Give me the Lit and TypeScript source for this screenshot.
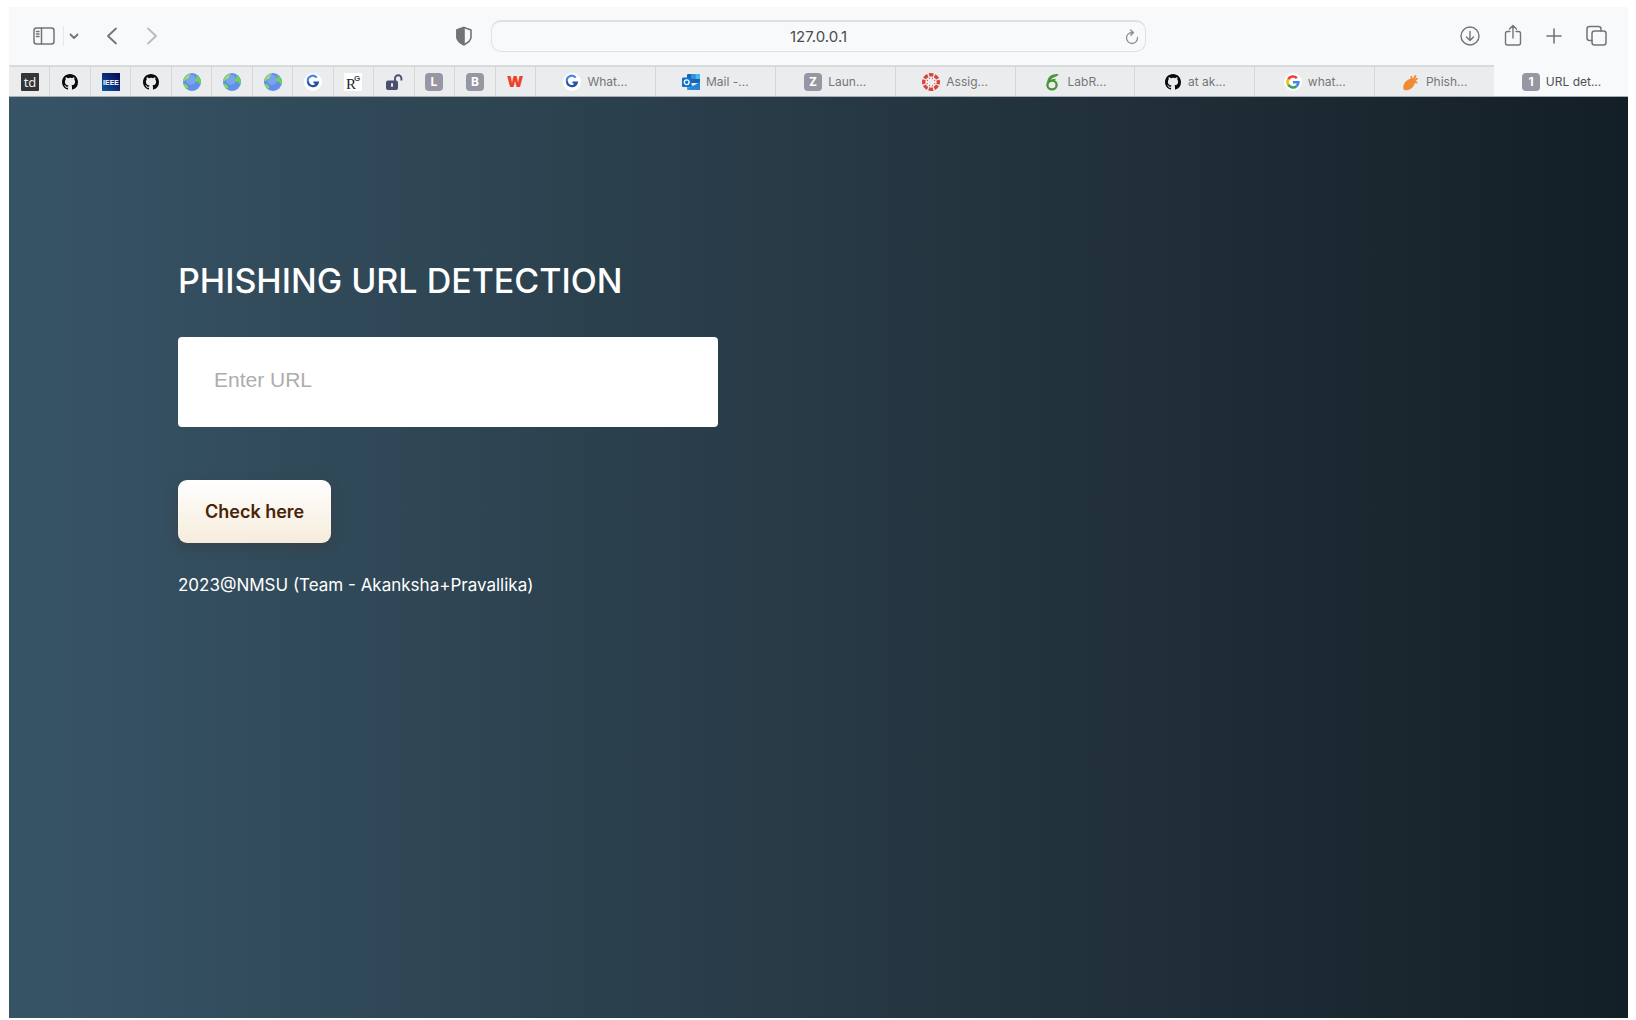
import { LitElement, html, svg, css, TemplateResult } from "lit";
import { customElement, state } from "lit/decorators.js";

interface Tab {
  name: string;
  icon: TemplateResult;
  label?: string;
}

const frame = (content: TemplateResult) =>
  html`<svg class="favicon" viewBox="0 0 18 18" aria-hidden="true">${content}</svg>`;

const letter = (char: string) =>
  frame(svg`<rect width="18" height="18" rx="4" fill="#9796a3"/>
    <text x="9" y="13" text-anchor="middle" font-family="Inter, sans-serif" font-size="12" font-weight="700" fill="#fff">${char}</text>`);

const github = () =>
  frame(svg`<path transform="translate(1 1)" fill="#0a0a0a" d="M8 0C3.58 0 0 3.58 0 8c0 3.54 2.29 6.53 5.47 7.59.4.07.55-.17.55-.38v-1.49c-2.23.48-2.7-.95-2.7-.95-.36-.92-.89-1.17-.89-1.17-.73-.5.05-.49.05-.49.81.06 1.23.83 1.23.83.72 1.23 1.88.87 2.34.67.07-.52.28-.88.51-1.08-1.78-.2-3.64-.89-3.64-3.95 0-.87.31-1.59.82-2.15-.08-.2-.36-1.02.08-2.12 0 0 .67-.21 2.2.82A7.6 7.6 0 0 1 8 3.86c.68 0 1.36.09 2 .27 1.53-1.04 2.2-.82 2.2-.82.44 1.1.16 1.92.08 2.12.51.56.82 1.27.82 2.15 0 3.07-1.87 3.75-3.65 3.95.29.25.54.73.54 1.48v2.2c0 .21.15.46.55.38A8 8 0 0 0 16 8c0-4.42-3.58-8-8-8z"/>`);

const globe = () =>
  frame(svg`<circle cx="9" cy="9" r="9" fill="#5f8fe8"/>
    <path d="M1.500 5C3 2 6 .7 8 .8c-.5 1.300-1.200 1.500-2 2.300.3 1.500-1 2-1.500 3C3.300 5.700 2.500 6.500 2.600 7.500 1.800 8 1 8 .3 8 .4 6.800.9 5.800 1.500 5z" fill="#8fdc60"/>
    <path d="M.5 11c1.500-.3 3.300.5 4.200 2 .8 1 .3 2.200.5 3.100C3 15.200 1.200 13.500.5 11z" fill="#7fe04e"/>
    <path d="M13 2.500c2.500.8 4.500 3 5 6-.1 1.200-.4 2.200-.8 3-1.200-.5-1-2-2.200-2.500-1.500 0-2.500-.7-2.700-2 0-1.300.8-1.800 1.200-2.500-.5-.6-.8-1.300-.5-2z" fill="#70d24d"/>
    <circle cx="8" cy="7" r="5" fill="#fff" opacity=".18"/>`);

const grammar = () =>
  frame(svg`<circle cx="9" cy="9" r="9" fill="#fff"/>
    <path d="M12.800 4.700A5 5 0 0 0 4 9" fill="none" stroke="#4a86e0" stroke-width="2.200"/>
    <path d="M4 8.500A5 5 0 0 0 13.800 9.500H9.500M13.800 9.500L10.500 13" fill="none" stroke="#2450a8" stroke-width="2.200"/>`);

const google = () =>
  frame(svg`<circle cx="9" cy="9" r="9" fill="#fff"/>
    <path d="M12.900 5.100A5.500 5.500 0 0 0 4.200 6.300" fill="none" stroke="#ea4335" stroke-width="2.600"/>
    <path d="M4.200 6.300A5.500 5.500 0 0 0 4.200 11.700" fill="none" stroke="#fbbc05" stroke-width="2.600"/>
    <path d="M4.200 11.700A5.500 5.500 0 0 0 12.500 13.200" fill="none" stroke="#34a853" stroke-width="2.600"/>
    <path d="M9 9.200H14.400A5.500 5.500 0 0 1 12.500 13.200" fill="none" stroke="#4285f4" stroke-width="2.600"/>`);

const td = () =>
  frame(svg`<rect width="18" height="18" rx="1" fill="#353535"/>
    <text x="9" y="14" text-anchor="middle" font-family="'Noto Sans', sans-serif" font-size="13" fill="#eee">td</text>`);

const ieee = () =>
  frame(svg`<defs><linearGradient id="navy" x1="1" y1="0" x2="0" y2="1"><stop offset="0" stop-color="#060b4c"/><stop offset=".5" stop-color="#0b2c7c"/><stop offset="1" stop-color="#0a5ba5"/></linearGradient></defs>
    <rect width="18" height="18" fill="url(#navy)"/>
    <text x="9" y="12" text-anchor="middle" font-family="'Liberation Sans Narrow', 'Liberation Sans', sans-serif" font-size="7" font-weight="700" fill="#fff">IEEE</text>`);

const research = () =>
  frame(svg`<rect width="18" height="18" fill="#fff"/>
    <text x="2" y="16" font-family="'Liberation Serif', serif" font-size="15" fill="#222">R</text>
    <text x="10" y="8" font-family="'Liberation Sans', sans-serif" font-size="8" font-weight="700" fill="#444">G</text>`);

const padlock = () =>
  frame(svg`<rect x="1" y="7.500" width="12" height="9.500" rx="2" fill="#4a4f6d"/>
    <path d="M10 8V5.500a3.200 3.200 0 0 1 6.400 0V7.500" fill="none" stroke="#4a4f6d" stroke-width="1.900"/>
    <rect x="6" y="10" width="2" height="4" rx="1" fill="#e9eaec"/>`);

const redW = () =>
  frame(svg`<text x="9" y="14" text-anchor="middle" font-family="Inter, sans-serif" font-size="15" font-weight="900" fill="#ee4228">W</text>`);

const outlook = () =>
  frame(svg`<rect x="5" y="1" width="13" height="9" rx="1" fill="#1b64b5"/>
    <rect x="9" y="1" width="4.500" height="5" fill="#2f93e0"/>
    <rect x="13.500" y="1" width="4.500" height="5" fill="#48b9f3"/>
    <path d="M5 9l6.500 4L18 9v7a1 1 0 0 1-1 1H6a1 1 0 0 1-1-1z" fill="#3fabec"/>
    <path d="M5 16.500L18 9v7a1 1 0 0 1-1 1z" fill="#2583d3"/>
    <rect y="4.500" width="9.500" height="9.500" rx="1" fill="#1270c6"/>
    <circle cx="4.700" cy="9.200" r="2.400" fill="none" stroke="#fff" stroke-width="1.300"/>`);

const canvasRing = () =>
  frame(svg`<circle cx="9" cy="9" r="7.300" fill="none" stroke="#d8453b" stroke-width="3.400" stroke-dasharray="4.400 1.333" stroke-dashoffset="2.200"/>
    <g fill="#d8453b">${[22.5, 67.5, 112.5, 157.5, 202.5, 247.5, 292.5, 337.5].map(
      (a) => svg`<circle cx="13" cy="9" r=".6" transform="rotate(${a} 9 9)"/>`
    )}</g>`);

const overleaf = () =>
  frame(svg`<ellipse cx="8" cy="12" rx="4.600" ry="4.400" fill="none" stroke="#48963a" stroke-width="2.300"/>
    <path d="M3.200 12C2.500 7 5 3 8 2c2-.8 4-1 6.500-1-.5 2-2.500 2.700-4.500 3.200C7.500 5 5.500 7.500 5.500 10z" fill="#48963a"/>
    <path d="M6 8.800c1.500-1.800 3.500-2.500 5.500-2.300" fill="none" stroke="#48963a" stroke-width="1.600"/>`);

const carrot = () =>
  frame(svg`<path d="M2 16.800c-1.400-1.400-.8-5.500 1.300-7.700C5.300 6.800 8 5.300 10 6l2.500 2c.8 2-.1 4.400-2.200 6.400-2 2.200-6.500 3.800-8.300 2.400z" fill="#f08a33"/>
    <path d="M10 7L9.300 4M11 7.500l2.500-4.500M11.500 8l3.500-2.300M11.500 8.500l3 1" fill="none" stroke="#f08a33" stroke-width="1.900" stroke-linecap="round"/>`);

const tabs: Tab[] = [
  { name: "td", icon: td() },
  { name: "GitHub", icon: github() },
  { name: "IEEE", icon: ieee() },
  { name: "GitHub", icon: github() },
  { name: "Web page", icon: globe() },
  { name: "Web page", icon: globe() },
  { name: "Web page", icon: globe() },
  { name: "G", icon: grammar() },
  { name: "RG", icon: research() },
  { name: "Open access", icon: padlock() },
  { name: "L", icon: letter("L") },
  { name: "B", icon: letter("B") },
  { name: "W", icon: redW() },
  { name: "What", icon: grammar(), label: "What..." },
  { name: "Mail", icon: outlook(), label: "Mail -..." },
  { name: "Laun", icon: letter("Z"), label: "Laun..." },
  { name: "Assig", icon: canvasRing(), label: "Assig..." },
  { name: "LabR", icon: overleaf(), label: "LabR..." },
  { name: "at ak", icon: github(), label: "at ak..." },
  { name: "what", icon: google(), label: "what..." },
  { name: "Phish", icon: carrot(), label: "Phish..." },
  { name: "URL det", icon: letter("1"), label: "URL det..." },
];

@customElement("browser-toolbar")
export class BrowserToolbar extends LitElement {
  static styles = css`
    :host {
      display: block;
      background: #f8f9fb;
      font-family: Inter, sans-serif;
    }
    .bar {
      display: grid;
      grid-template-columns: 1fr 40.5% 1fr;
      align-items: center;
      height: 58px;
    }
    .side {
      display: flex;
      align-items: center;
      padding: 0 17px 0 23px;
    }
    .end {
      justify-content: flex-end;
      gap: 21px;
    }
    .tool {
      display: flex;
      padding: 0;
      border: 0;
      background: none;
      color: #737477;
    }
    .tool svg {
      display: block;
      fill: none;
      stroke: currentColor;
      stroke-linecap: round;
      stroke-linejoin: round;
    }
    .menu {
      margin-left: 7px;
      border-left: 1px solid #e6e7e9;
    }
    .back {
      margin-left: 16px;
    }
    .forward {
      margin-left: 16px;
      color: #b9babd;
    }
    .shield {
      margin-left: auto;
    }
    .address {
      display: flex;
      align-items: center;
      box-sizing: border-box;
      height: 32px;
      padding: 0 5px 0 21px;
      border: 1px solid #dfe0e2;
      border-top-width: 2px;
      border-radius: 10px;
    }
    .url {
      flex: 1;
      min-width: 0;
      padding: 0;
      border: 0;
      outline: 0;
      background: none;
      color: #4b4c4e;
      font: 15px Inter, sans-serif;
      text-align: center;
    }
  `;

  render() {
    return html`
      <div class="bar">
        <div class="side">
          <button class="tool" aria-label="Sidebar">
            <svg width="24" height="24" viewBox="0 0 24 24" stroke-width="1.500">
              <rect x="2" y="4" width="20" height="16" rx="2.500"/>
              <path d="M9.500 4v16M4.500 7.500h2.500M4.500 10h2.500M4.500 12.500h2.500"/>
            </svg>
          </button>
          <button class="tool menu" aria-label="Tab groups">
            <svg width="20" height="20" viewBox="0 0 20 20" stroke-width="1.800"><path d="M6.500 8.500L10 12l3.500-3.500"/></svg>
          </button>
          <button class="tool back" aria-label="Back">
            <svg width="24" height="24" viewBox="0 0 24 24" stroke-width="1.800"><path d="M16 4.500L8 12l8 7.500"/></svg>
          </button>
          <button class="tool forward" aria-label="Forward">
            <svg width="24" height="24" viewBox="0 0 24 24" stroke-width="1.800"><path d="M8 4.500l8 7.500-8 7.500"/></svg>
          </button>
          <button class="tool shield" aria-label="Privacy report">
            <svg width="20" height="20" viewBox="0 0 20 20" stroke-width="1.600">
              <path d="M10 1.500l7 2.500v7c0 3.500-3.500 6-7 7.700C6.500 17 3 14.500 3 11V4z"/>
              <path d="M10 1.500v17.200C6.500 17 3 14.500 3 11V4z" fill="currentColor"/>
            </svg>
          </button>
        </div>
        <div class="address">
          <input class="url" type="text" aria-label="Address" value="127.0.0.1" />
          <button class="tool" aria-label="Reload">
            <svg width="16" height="16" viewBox="0 0 16 16" stroke-width="1.300" color="#8c8d90">
              <path d="M8.500 3.500A5.500 5.500 0 1 0 13.500 8.500M6.500 1l3 2.500-2.700 2.800"/>
            </svg>
          </button>
        </div>
        <div class="side end">
          <button class="tool" aria-label="Downloads">
            <svg width="20" height="24" viewBox="0 0 20 24" stroke-width="1.400">
              <circle cx="10" cy="12" r="9"/><path d="M10 7.500v9M6.500 13l3.500 3.500 3.500-3.500"/>
            </svg>
          </button>
          <button class="tool" aria-label="Share">
            <svg width="24" height="24" viewBox="0 0 24 24" stroke-width="1.400">
              <path d="M9 7.500H6.500a2 2 0 0 0-2 2V19a2 2 0 0 0 2 2h11a2 2 0 0 0 2-2V9.500a2 2 0 0 0-2-2H15M12 14V1.500M8.500 5L12 1.500 15.500 5"/>
            </svg>
          </button>
          <button class="tool" aria-label="New tab">
            <svg width="16" height="24" viewBox="0 0 16 24" stroke-width="1.600"><path d="M8 5v14M1 12h14"/></svg>
          </button>
          <button class="tool" aria-label="Tab overview">
            <svg width="28" height="24" viewBox="0 0 28 24" stroke-width="1.500">
              <rect x="9" y="7" width="14" height="14" rx="2.500"/>
              <path d="M9 16.500H6.500a2.500 2.500 0 0 1-2.500-2.500V5a2.500 2.500 0 0 1 2.500-2.500h9a2.500 2.500 0 0 1 2.500 2.500v2"/>
            </svg>
          </button>
        </div>
      </div>
    `;
  }
}

@customElement("browser-tabs")
export class BrowserTabs extends LitElement {
  @state() private active = tabs.length - 1;

  static styles = css`
    :host {
      display: block;
      background: #ebeced;
      border-bottom: 1px solid #a9adb1;
    }
    .tabs {
      display: grid;
      grid-template-columns: repeat(13, 81fr) repeat(8, 240fr) 268fr;
      height: 31px;
    }
    .tab {
      display: flex;
      align-items: center;
      justify-content: center;
      gap: 6px;
      min-width: 0;
      padding: 0;
      border: 0;
      border-left: 1px solid #d5d6d8;
      border-top: 2px solid #d9dadc;
      background: none;
      color: #757679;
      font: 12px Inter, sans-serif;
      white-space: nowrap;
    }
    .tab:first-child {
      border-left-color: transparent;
    }
    .tab.active {
      border-color: #f8f9fb;
      background: #f8f9fb;
      color: #4f5053;
    }
    .favicon {
      flex: none;
      display: block;
      width: 18px;
      height: 18px;
    }
  `;

  render() {
    return html`
      <div class="tabs" role="tablist">
        ${tabs.map(
          (tab, i) => html`
            <button
              class="tab ${i === this.active ? "active" : ""}"
              role="tab"
              aria-selected=${i === this.active}
              aria-label=${tab.name}
              @click=${() => (this.active = i)}
            >
              ${tab.icon}${tab.label ? html`<span>${tab.label}</span>` : ""}
            </button>
          `
        )}
      </div>
    `;
  }
}

@customElement("app-root")
export class AppRoot extends LitElement {
  static styles = css`
    :host {
      display: flex;
      flex-direction: column;
      box-sizing: border-box;
      min-height: 100vh;
      padding: 7px 8px 2px 9px;
      background: #fff;
      font-family: Inter, sans-serif;
    }
    .page {
      flex: 1;
      padding: 158px 169px;
      background: linear-gradient(to right, #375467 0%, #2e4553 28%, #24343f 60%, #131f26 100%);
      color: #fff;
    }
    .title {
      margin: 0 0 30px;
      font-size: 34px;
      font-weight: 500;
      line-height: 52px;
    }
    .field {
      display: block;
      box-sizing: border-box;
      width: 100%;
      max-width: 540px;
      height: 90px;
      padding: 0 36px 4px;
      border: 0;
      border-radius: 4px;
      background: #fff;
      color: #333;
      font: 21px "Liberation Sans", sans-serif;
    }
    .field::placeholder {
      color: #adadad;
      opacity: 1;
    }
    .check {
      display: block;
      margin: 53px 0 28px;
      padding: 0 27px;
      border: 0;
      border-radius: 9px;
      background: linear-gradient(#fff, #f5ecdb);
      box-shadow: 0 4px 12px rgba(66, 50, 42, 0.4);
      color: #482307;
      font: 600 18px/63px Inter, sans-serif;
    }
    .credit {
      margin: 0;
      font-size: 17px;
      line-height: 28px;
    }
  `;

  render() {
    return html`
      <browser-toolbar></browser-toolbar>
      <browser-tabs></browser-tabs>
      <main class="page">
        <h1 class="title">PHISHING URL DETECTION</h1>
        <form @submit=${(e: Event) => e.preventDefault()}>
          <input class="field" type="text" name="url" placeholder="Enter URL" aria-label="Enter URL" />
          <button class="check" type="submit">Check here</button>
        </form>
        <p class="credit">2023@NMSU (Team - Akanksha+Pravallika)</p>
      </main>
    `;
  }
}
